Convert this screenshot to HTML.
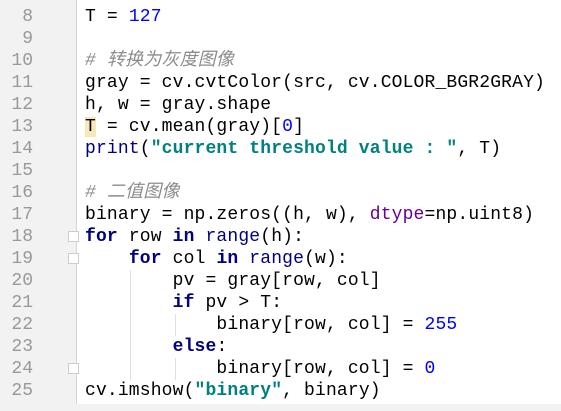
<!DOCTYPE html><html><head><style>
body{margin:0;width:561px;height:411px;overflow:hidden;background:#fff;position:relative;font-family:"Liberation Mono","Noto Sans CJK SC",monospace;font-size:18px}
#g{position:absolute;left:0;top:0;width:76px;height:404px;background:#f2f2f2;border-right:1px solid #d5d5d5}
#b{position:absolute;left:0;top:404px;width:561px;height:7px;background:#f2f2f2}
.n{position:absolute;right:528px;color:#999;width:40px;text-align:right}
.l{position:absolute;left:85px;white-space:pre;color:#000;letter-spacing:0.15px}
.k{color:#000080;font-weight:bold}.num{color:#0000ff}.s{color:#008080;font-weight:bold}
.c{color:#8c8c8c;font-style:italic}.f{color:#000080}.p{color:#660099}
.hl{background:#f7e8b8}
.ig{position:absolute;width:1px;background:#e0e0e0}
.fo{position:absolute;left:68px;width:11px;height:11px;border:1px solid #ccc;background:#fff;box-sizing:border-box}
</style></head><body>
<div id="g"></div><div id="b"></div>
<div class="n" style="top:6px;line-height:22px">8<br>9<br>10<br>11<br>12<br>13<br>14<br>15<br>16<br>17<br>18<br>19<br>20<br>21<br>22<br>23<br>24<br>25</div>
<div class="l" style="top:6px;line-height:22px">T = <span class="num">127</span>

<span class="c"># 转换为灰度图像</span>
gray = cv.cvtColor(src, cv.COLOR_BGR2GRAY)
h, w = gray.shape
<span class="hl">T</span> = cv.mean(gray)[<span class="num">0</span>]
<span class="f">print</span>(<span class="s">"current threshold value : "</span>, T)

<span class="c"># 二值图像</span>
binary = np.zeros((h, w), <span class="p">dtype</span>=np.uint8)
<span class="k">for</span> row <span class="k">in</span> <span class="f">range</span>(h):
    <span class="k">for</span> col <span class="k">in</span> <span class="f">range</span>(w):
        pv = gray[row, col]
        <span class="k">if</span> pv &gt; T:
            binary[row, col] = <span class="num">255</span>
        <span class="k">else</span>:
            binary[row, col] = <span class="num">0</span>
cv.imshow(<span class="s">"binary"</span>, binary)</div>
<div class="ig" style="left:130px;top:270px;height:110px"></div>
<div class="ig" style="left:175px;top:314px;height:22px"></div>
<div class="ig" style="left:175px;top:358px;height:22px"></div>
<div class="fo" style="top:231px"></div>
<div class="fo" style="top:253px"></div>
<div class="fo" style="top:363px"></div>
</body></html>
